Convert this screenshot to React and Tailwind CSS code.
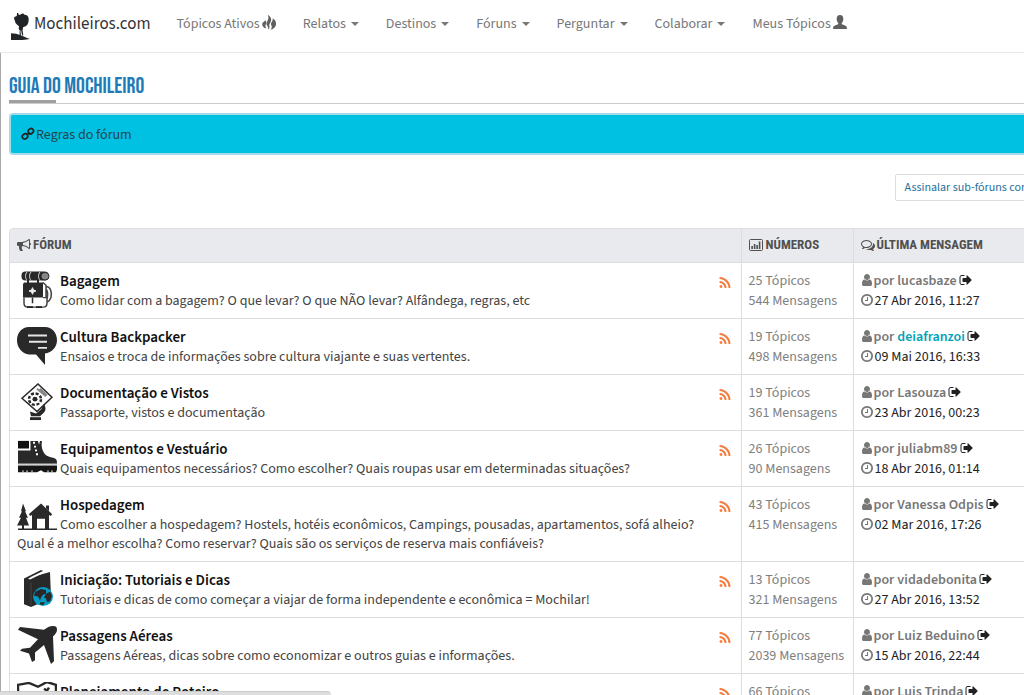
import clsx from 'clsx'

const NAV_LINKS = [
  { label: 'Tópicos Ativos', icon: 'fire' },
  { label: 'Relatos', menu: true },
  { label: 'Destinos', menu: true },
  { label: 'Fóruns', menu: true },
  { label: 'Perguntar', menu: true },
  { label: 'Colaborar', menu: true },
  { label: 'Meus Tópicos', icon: 'person' }
]

const FORUMS = [
  {
    icon: 'backpack',
    title: 'Bagagem',
    description: 'Como lidar com a bagagem? O que levar? O que NÃO levar? Alfândega, regras, etc',
    topics: 25,
    posts: 544,
    user: 'lucasbaze',
    date: '27 Abr 2016, 11:27'
  },
  {
    icon: 'speech',
    title: 'Cultura Backpacker',
    description: 'Ensaios e troca de informações sobre cultura viajante e suas vertentes.',
    topics: 19,
    posts: 498,
    user: 'deiafranzoi',
    highlight: true,
    date: '09 Mai 2016, 16:33'
  },
  {
    icon: 'passport',
    title: 'Documentação e Vistos',
    description: 'Passaporte, vistos e documentação',
    topics: 19,
    posts: 361,
    user: 'Lasouza',
    date: '23 Abr 2016, 00:23'
  },
  {
    icon: 'boot',
    title: 'Equipamentos e Vestuário',
    description: 'Quais equipamentos necessários? Como escolher? Quais roupas usar em determinadas situações?',
    topics: 26,
    posts: 90,
    user: 'juliabm89',
    date: '18 Abr 2016, 01:14'
  },
  {
    icon: 'cabin',
    title: 'Hospedagem',
    description:
      'Como escolher a hospedagem? Hostels, hotéis econômicos, Campings, pousadas, apartamentos, sofá alheio? Qual é a melhor escolha? Como reservar? Quais são os serviços de reserva mais confiáveis?',
    topics: 43,
    posts: 415,
    user: 'Vanessa Odpis',
    date: '02 Mar 2016, 17:26'
  },
  {
    icon: 'book',
    title: 'Iniciação: Tutoriais e Dicas',
    description: 'Tutoriais e dicas de como começar a viajar de forma independente e econômica = Mochilar!',
    topics: 13,
    posts: 321,
    user: 'vidadebonita',
    date: '27 Abr 2016, 13:52'
  },
  {
    icon: 'plane',
    title: 'Passagens Aéreas',
    description: 'Passagens Aéreas, dicas sobre como economizar e outros guias e informações.',
    topics: 77,
    posts: 2039,
    user: 'Luiz Beduino',
    date: '15 Abr 2016, 22:44'
  },
  {
    icon: 'map',
    title: 'Planejamento de Roteiro',
    topics: 66,
    user: 'Luis Trinda'
  }
]

// Small glyphs, drawn on a 1792 unit grid
const GLYPHS = {
  rss: 'M576 1344q0 80-56 136t-136 56-136-56-56-136 56-136 136-56 136 56 56 136zm512 123q2 28-17 48-18 21-47 21h-135q-25 0-43-16.5t-20-41.5q-22-229-184.5-391.5t-391.5-184.5q-25-2-41.5-20t-16.5-43v-135q0-29 21-47 17-17 43-17h5q160 13 306 80.5t259 181.5q114 113 181.5 259t80.5 306zm512 2q2 27-18 47-18 20-46 20h-143q-26 0-44.5-17.5t-19.5-42.5q-12-215-101-408.5t-231.5-336-336-231.5-408.5-102q-25-1-42.5-19.5t-17.5-43.5v-143q0-28 20-46 18-18 44-18h3q262 13 501.5 120t425.5 294q187 186 294 425.5t120 501.5z',
  user: 'M1536 1399q0 109-62.5 187t-150.5 78h-854q-88 0-150.5-78t-62.5-187q0-85 8.5-160.5t31.5-152 58.5-131 94-89 134.5-34.5q131 128 313 128t313-128q76 0 134.5 34.5t94 89 58.5 131 31.5 152 8.500 160.500zm-256-887q0 159-112.5 271.5t-271.5 112.5-271.5-112.5-112.5-271.5 112.5-271.5 271.5-112.5 271.5 112.5 112.5 271.5z',
  clock: 'M1024 544v448q0 14-9 23t-23 9h-320q-14 0-23-9t-9-23v-64q0-14 9-23t23-9h224v-352q0-14 9-23t23-9h64q14 0 23 9t9 23zm416 352q0-148-73-273t-198-198-273-73-273 73-198 198-73 273 73 273 198 198 273 73 273-73 198-198 73-273zm224 0q0 209-103 385.5t-279.5 279.5-385.5 103-385.5-103-279.5-279.5-103-385.5 103-385.5 279.5-279.5 385.5-103 385.5 103 279.5 279.5 103 385.5z',
  signOut: 'M704 1440q0 4 1 20t.5 26.5-3 23.5-10 19.5-20.5 6.5h-320q-119 0-203.5-84.5t-84.5-203.5v-704q0-119 84.5-203.5t203.5-84.5h320q13 0 22.5 9.5t9.5 22.5q0 4 1 20t.5 26.5-3 23.5-10 19.5-20.5 6.5h-320q-66 0-113 47t-47 113v704q0 66 47 113t113 47h312l11.5 1 11.5 3 8 5.5 7 9 2 13.5zm928-544q0 26-19 45l-544 544q-19 19-45 19t-45-19-19-45v-288h-448q-26 0-45-19t-19-45v-384q0-26 19-45t45-19h448v-288q0-26 19-45t45-19 45 19l544 544q19 19 19 45z',
  comments: 'M704 384q-153 0-286 52t-211.5 141-78.5 191q0 82 53 158t149 132l97 56-35 84q34-20 62-39l44-31 53 10q78 14 153 14 153 0 286-52t211.5-141 78.5-191-78.5-191-211.5-141-286-52zm0-128q191 0 353.5 68.5t256.5 186.5 94 257-94 257-256.5 186.5-353.5 68.5q-86 0-176-16-124 88-278 128-36 9-86 16h-3q-11 0-20.5-8t-11.5-21q-1-3-1-6.5t.5-6.5 2-6l2.5-5 3.5-5.5 4-5 4.5-5 4-4.5q5-6 23-25t26-29.5 22.5-29 25-38.5 20.5-44q-124-72-195-177t-71-224q0-139 94-257t256.5-186.5 353.5-68.5zm822 1169q10 24 20.5 44t25 38.5 22.5 29 26 29.5 23 25q1 1 4 4.5t4.5 5 4 5 3.5 5.5l2.5 5 2 6 .5 6.5-1 6.5q-3 14-13 22t-22 7q-50-7-86-16-154-40-278-128-90 16-176 16-271 0-472-132 58 4 88 4 161 0 309-45t264-129q125-92 192-212t67-254q0-77-23-152 129 71 204 178t75 230q0 120-71 224.5t-195 176.5z',
  bullhorn: 'M1664 640q53 0 90.5 37.5t37.5 90.5-37.5 90.5-90.5 37.5v384q0 52-38 90t-90 38q-417-347-812-380-58 19-91 66t-31 100.5 40 92.5q-20 33-23 65.5t6 58 33.5 55 48 50 61.5 50.5q-29 58-111.5 83t-168.5 11.5-132-55.5q-7-23-29.5-87.5t-32-94.5-23-89-15-101 3.5-98.5 22-110.5h-122q-66 0-113-47t-47-113v-192q0-66 47-113t113-47h480q435 0 896-384 52 0 90 38t38 90v384zm-128 604v-954q-394 302-768 343v270q377 42 768 341z'
}

function Glyph({ name, className = '' }) {
  return (
    <svg viewBox="0 0 1792 1792" fill="currentColor" className={clsx('h-3.5 w-3.5 shrink-0', className)} aria-hidden="true">
      <path d={GLYPHS[name]} />
    </svg>
  )
}

function ChartIcon() {
  return (
    <svg viewBox="0 0 14 12" className="h-3 w-3.5 shrink-0" aria-hidden="true">
      <rect x="0.5" y="0.5" width="13" height="11" rx="1" fill="none" stroke="currentColor" />
      <path d="M2.3 7h1.6v3H2.3zM4.8 5h1.6v5H4.8zM7.3 6h1.6v4H7.3zM9.8 2.5h1.6V10H9.8z" fill="currentColor" />
    </svg>
  )
}

function ChainIcon() {
  return (
    <svg viewBox="0 0 14 14" className="mb-1 h-3.5 w-3.5 shrink-0" fill="none" stroke="#222" strokeWidth="1.7" aria-hidden="true">
      <rect x="1.200" y="7" width="5.600" height="4.800" rx="2.400" transform="rotate(-42 4 9.400)" />
      <rect x="7" y="1.800" width="5.600" height="4.800" rx="2.400" transform="rotate(-42 9.800 4.200)" />
      <path d="M5.600 8.200l3-2.800" />
    </svg>
  )
}

function FireIcon() {
  return (
    <svg viewBox="0 0 14 15" className="mb-1 h-[15px] w-3.5 shrink-0" fill="#606060" aria-hidden="true">
      <path d="M5.800 0c3 1.500 4.200 4.200 2.800 7C7.600 8.800 7 9.800 7.400 11.500c.2 1.300-.2 2.300-1.200 3.100.3-1.600-.1-2.500-.9-3.500-1-1.300-1.200-2.800-.3-4.300C6.500 4.500 6.900 2.400 5.800 0z" />
      <path d="M3.300 5.200c1.300 1.600 1 3 .3 4.500-.5 1.200-.1 2.300.9 3.600C1.900 13 0 11 .2 8.900c.2-1.600 1.400-1.500 3.100-3.700z" />
      <path d="M10.500 3.200c2.500 1.300 3.800 3.500 3.500 6.200-.3 2.500-2.200 4.400-5.400 5.400 1.400-1.700 1.500-3 .6-4.800-.6-1.500.2-2.500 1-3.800.6-1 .7-1.800.3-3z" />
    </svg>
  )
}

function PersonIcon() {
  return (
    <svg viewBox="0 0 14 14" className="mb-1 h-3.5 w-3.5 shrink-0" fill="#606060" aria-hidden="true">
      <path d="M7 0c2.200 0 3.400 1.600 3.300 3.900 0 1.700-.6 3-1.400 3.900-.3.400-.2 1.200.2 1.500.9.600 2.700 1.100 3.800 1.800.8.500 1 1.300 1.100 2.900H0c.1-1.600.3-2.400 1.100-2.900 1.100-.7 2.900-1.200 3.800-1.800.4-.3.500-1.100.2-1.500-.8-.9-1.400-2.200-1.400-3.900C3.600 1.600 4.800 0 7 0z" />
    </svg>
  )
}

function Logo() {
  return (
    <svg viewBox="0 0 20 28" className="mt-1.5 h-7 w-5 shrink-0" fill="#212427" aria-hidden="true">
      <path d="M6 0h1.300l.4 2 2-.5 1.300-1 1.800.3.700.9 2.300.6c1.600 1.100 2.200 3.200 1.800 5.500-.2 2.900-1.500 4.900-3.600 5.700l-2 .7-.4 3.400.7 4.700-1.200.3-1-5.300-.6.300.5 5.800-1.500-.4.200-5.500-1-1.700.3-2.600C5.200 11.200 4 9.700 4 7.700l-.9-1.800.2-1.900 2.500-.9z" />
      <path d="M0 20.300l5.200.5 6.500 2.200 3.200 1.600 4 1.400-3.400.4-4 .6H0z" />
    </svg>
  )
}

// Pictures at the left of each forum row, 40 units square
const PICTURES = {
  backpack: (
    <>
      <rect x="4.500" y="0.500" width="27" height="9.500" rx="4" />
      <path d="M10 1c-2 3-2 6 0 9M14 1c-2 3-2 6 0 9M23 1c-2 3-2 6 0 9" fill="none" stroke="#ddd" strokeWidth="1" />
      <circle cx="28" cy="5.500" r="4" fill="#888" stroke="#292929" />
      <path d="M7 12h19v16H6V14z" />
      <path d="M26 12l3 3v13h-3M7 28v6c0 3 1 4 4 4h15c3 0 4-2 4-4v-6M29 16c5 1 6 6 5 12-1 3-2 4-4 5M29 19c2 2 2 6 1 11" fill="none" stroke="#444" strokeWidth="1.500" />
      <path d="M10 38h6m3 0h6" stroke="#222" strokeWidth="2" />
      <path d="M11 9v4M21 9v4" stroke="#292929" strokeWidth="2" />
      <path d="M15.500 17.500l1 2.500 2.500 1-2.500 1-1 2.500-1-2.500-2.500-1 2.500-1z" fill="#eee" stroke="#eee" />
      <path d="M15.500 28v6" stroke="#292929" strokeWidth="1.500" />
    </>
  ),
  speech: (
    <>
      <path d="M12 0h16c7 0 12 6 12 14 0 7-5 13-12 14v12l-9-11h-7C5 28 0 22 0 14S5 0 12 0z" />
      <path d="M11 9h19M12 15.500h18M21 22h9" stroke="#e5e5e5" strokeWidth="2" />
    </>
  ),
  passport: (
    <>
      <path d="M21 1l14 14-15 15L5 16z" fill="#fff" stroke="#292929" strokeWidth="1.500" />
      <path d="M20 6l9 8M23 6l7 7" stroke="#888" strokeWidth="2" />
      <circle cx="18" cy="17" r="6" fill="none" stroke="#292929" strokeWidth="2.500" strokeDasharray="3 1.700" />
      <circle cx="18" cy="17" r="2.500" />
      <path d="M24 28l3-6c2 3 2 7 0 9l-4 4H14l-1-5 6 2z" />
      <path d="M13 36h11v3H13z" />
    </>
  ),
  boot: (
    <>
      <path d="M1 2h11v8H1z" fill="#111" />
      <path d="M1 12h12.500V2H25c-1 5 0 11 4 15 3 2 5 2 8 3s3 3 3 6H1z" />
      <path d="M1 28h39v4l-1 3H27l-3-2-4 2H1z" fill="#151515" />
      <path d="M1 26.500h39" stroke="#bbb" strokeWidth="1" />
      <path d="M16 4h2M17 8h2M18 12h2M19 16h2" stroke="#fff" strokeWidth="2" />
      <path d="M21 2l1 4 1-4z" fill="#fff" />
      <path d="M6 35v-2M10 35v-2M15 35v-2M31 35v-2M35 35v-2" stroke="#fff" strokeWidth="1" />
    </>
  ),
  cabin: (
    <>
      <path d="M6 9l3 8H8l3 7H9l3 8H7v4H5v-4H0l4-8H2l3-7H4z" />
      <path d="M24 9l11 11-1 2-2-1v15h-4V25h-8v11h-5V21l-2 1-1-2z" />
      <path d="M29 11h3v6l-3-3z" />
      <path d="M1 36h39" stroke="#292929" strokeWidth="1.500" />
    </>
  ),
  book: (
    <>
      <path d="M7 9L24 0l2 1-13 7 20-6 1 28-20 9-7-3z" />
      <path d="M11 9l14-7v2l-12 6z" fill="#fff" />
      <path d="M14 13v24" stroke="#444" strokeWidth="1" />
      <circle cx="26" cy="28" r="10" fill="#069cc4" />
      <path d="M18 23l6-3 5 1v4l-3 1-2 3-1 3-2-4-4-1zM29 25l4-2 2 4-2 6-3 1-1-4-2-1zM23 34l5 0-2 3-3-1z" />
    </>
  ),
  plane: (
    <path d="M36 0c3 0 4 1 4 4 0 2-1 4-4 7l1 26-3 3-7-20-9 8v8l-3 2-3-9-9-3 2-2 8-1 8-9L1 4l2-3 24 3c4-3 6-4 9-4z" />
  ),
  map: (
    <>
      <path d="M1 3l11-2 9 4 9-5 9 3v31l-9-3-9 5-9-4-11 2z" fill="#fff" stroke="#292929" strokeWidth="2.500" />
      <path d="M9 15c1-5 5-5 8-2M27 7l6 4M32 6l-4 6" fill="none" stroke="#292929" strokeWidth="2.500" />
    </>
  )
}

function ForumPicture({ name }) {
  return (
    <svg viewBox="0 0 40 40" className="float-left mr-[3px] h-[38px] w-10" preserveAspectRatio="none" fill="#292929" aria-hidden="true">
      {PICTURES[name]}
    </svg>
  )
}

function NavItem({ item }) {
  if (item.menu) {
    return (
      <button type="button" className="flex cursor-pointer items-center gap-[5px] hover:text-gray-900">
        {item.label}
        <span className="border-x-4 border-t-4 border-x-transparent border-t-current" />
      </button>
    )
  }
  return (
    <a href="#" className="flex items-center gap-0.5 hover:text-gray-900">
      {item.label}
      {item.icon === 'fire' ? <FireIcon /> : <PersonIcon />}
    </a>
  )
}

function ForumRow({ forum }) {
  return (
    <tr className="border-t border-[#ddd] align-top">
      <td className="px-[7px] pt-2 pb-[7px]">
        <a href="#" aria-label={`Feed - ${forum.title}`} className="float-right mt-[5px] mr-0.5 ml-1 pb-2 text-[#f47c3c]">
          <Glyph name="rss" />
        </a>
        <ForumPicture name={forum.icon} />
        <a href="#" className="mb-px block pt-px text-[15px] font-semibold text-[#111] hover:underline">{forum.title}</a>
        <p className="inline text-[#444]">{forum.description}</p>
      </td>
      <td className="space-y-px border-l border-[#ddd] px-[7px] pt-[9px] pb-[7px] whitespace-nowrap text-[#808080]">
        <div>{forum.topics} Tópicos</div>
        {forum.posts && <div>{forum.posts} Mensagens</div>}
      </td>
      <td className="space-y-px border-l border-[#ddd] px-[7px] pt-[9px] pb-[7px] text-[#777]">
        <div className="flex items-center font-semibold">
          <Glyph name="user" className="-ml-px mb-1" />
          por
          <a href="#" className={clsx('mr-0.5 ml-[3px]', forum.highlight && 'text-[#00a3b8]')}>{forum.user}</a>
          <a href="#" aria-label="Ver última mensagem" className="text-[#222]">
            <Glyph name="signOut" className="mb-1" />
          </a>
        </div>
        {forum.date && (
          <div className="flex items-center gap-px">
            <Glyph name="clock" className="-ml-px mb-1" />
            <span className="text-[#222]">{forum.date}</span>
          </div>
        )}
      </td>
    </tr>
  )
}

export default function App() {
  return (
    <div className="h-screen overflow-hidden bg-white font-['Source_Sans_Pro','Source_Sans_3','Noto_Sans_CJK_SC',sans-serif] text-[14px] leading-[19px] text-[#444]">
      <nav className="flex h-[53px] items-center border-b border-[#e7e7e7] pb-1 pl-[11px] text-[#777]">
        <a href="#" className="flex items-center gap-[3px] text-[17px] text-[#333]">
          <Logo />
          Mochileiros.com
        </a>
        <div className="flex items-center gap-[27px] pl-[26px] whitespace-nowrap">
          {NAV_LINKS.map((item) => (
            <NavItem key={item.label} item={item} />
          ))}
        </div>
      </nav>

      <main className="border-l border-[#aaa] pl-2">
        <div className="w-[calc(100%+56px)]">
          {/* Section title */}
          <div className="border-b border-[#ccc] pt-5">
            <h1 className="text-[22px] leading-[27px] font-normal text-[#1f7bb8] font-['Bebas_Neue','Roboto_Condensed',Roboto,sans-serif]">
              GUIA DO MOCHILEIRO
            </h1>
            <div className="h-[3px] w-[47px] bg-[#a0a0a0]" />
          </div>

          <div className="mt-[9px] rounded-sm border-2 border-[#a5dbe4] bg-[#00c1e2] px-2.5 pt-[11px] pb-2">
            <a href="#" className="flex items-center gap-px text-[#23444c]">
              <ChainIcon />
              Regras do fórum
            </a>
          </div>

          <div className="mt-[19px] flex justify-end pr-1.5">
            <button type="button" className="rounded-xs border border-[#ddd] px-[9px] py-1 text-[12px] leading-[17px] text-[#1f6f9c]">
              Assinalar sub-fóruns como lidos
            </button>
          </div>

          {/* Forum list */}
          <div className="mt-[27px] overflow-hidden rounded-t border border-[#ddd]">
            <table className="w-full table-fixed border-collapse text-left">
              <thead>
                <tr className="bg-[#e9eaed] text-[13px] text-[#505050] font-['Roboto_Condensed',Roboto,sans-serif]">
                  <th className="px-[7px] pt-1.5 pb-2">
                    <span className="flex items-center gap-0.5"><Glyph name="bullhorn" />FÓRUM</span>
                  </th>
                  <th className="w-28 border-l border-[#ddd] px-[7px] pt-1.5 pb-2">
                    <span className="flex items-center gap-[3px]"><ChartIcon />NÚMEROS</span>
                  </th>
                  <th className="w-[226px] border-l border-[#ddd] px-[7px] pt-1.5 pb-2">
                    <span className="flex items-center gap-0.5"><Glyph name="comments" />ÚLTIMA MENSAGEM</span>
                  </th>
                </tr>
              </thead>
              <tbody>
                {FORUMS.map((forum) => (
                  <ForumRow key={forum.title} forum={forum} />
                ))}
              </tbody>
            </table>
          </div>
        </div>
      </main>

      <div className="fixed bottom-0 left-0 h-1 w-[331px] rounded-tr border-t border-[#ccc] bg-[#ddd]" />
    </div>
  )
}
